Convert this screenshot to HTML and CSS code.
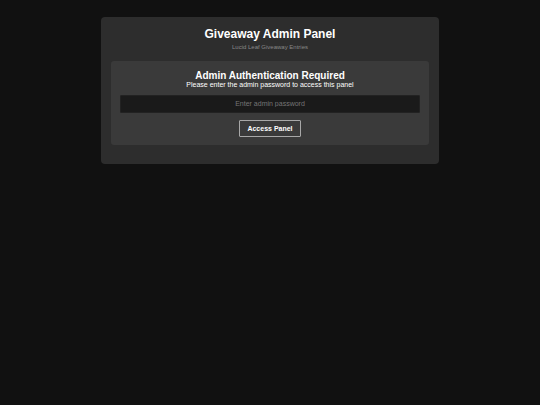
FILE: index.html
```html
<!DOCTYPE html>
<html lang="en">
<head>
<meta charset="utf-8">
<meta name="viewport" content="width=device-width, initial-scale=1">
<title>Giveaway Admin Panel</title>
<link rel="stylesheet" href="styles.css">
</head>
<body>
<main class="panel">
  <header class="panel-header">
    <h1 class="title">Giveaway Admin Panel</h1>
    <p class="subtitle">Lucid Leaf Giveaway Entries</p>
  </header>
  <form class="auth">
    <h2 class="auth-title">Admin Authentication Required</h2>
    <label class="auth-text" for="password">Please enter the admin password to access this panel</label>
    <input class="auth-input" id="password" type="password" placeholder="Enter admin password">
    <button class="auth-button" type="button">Access Panel</button>
  </form>
</main>
</body>
</html>
```

FILE: styles.css
```css
* {
  box-sizing: border-box;
}

body {
  margin: 0;
  padding: 17px 16px;
  background: #111111;
  color: #ffffff;
  font-family: "Liberation Sans", Arial, sans-serif;
}

h1,
h2,
p {
  margin: 0;
}

.panel {
  max-width: 338px;
  margin: 0 auto;
  padding: 11px 10px 19px;
  border-radius: 4px;
  background: #2d2d2d;
  text-align: center;
}

.panel-header {
  margin-bottom: 10px;
}

.title {
  margin-bottom: 3px;
  font-size: 12px;
  line-height: 13px;
}

.subtitle {
  color: #888888;
  font-size: 6px;
  line-height: 7px;
}

.auth {
  display: flex;
  flex-direction: column;
  align-items: center;
  padding: 9px 9px 8px;
  border-radius: 3px;
  background: #3a3a3a;
}

.auth-title {
  font-size: 10px;
  line-height: 11px;
}

.auth-text {
  margin-bottom: 6px;
  font-size: 7px;
  line-height: 8px;
}

.auth-input {
  width: 100%;
  height: 18px;
  margin-bottom: 7px;
  padding: 0 6px 2px;
  border: 1px solid #222222;
  border-radius: 1px;
  background: #1a1a1a;
  color: #ffffff;
  font: 7px "Liberation Sans", Arial, sans-serif;
  text-align: center;
}

.auth-input::placeholder {
  color: #757575;
}

.auth-button {
  height: 17px;
  padding: 0 7px;
  border: 1px solid #a8a8a8;
  border-radius: 1px;
  background: transparent;
  color: #ffffff;
  font: bold 7px "Liberation Sans", Arial, sans-serif;
}
```
